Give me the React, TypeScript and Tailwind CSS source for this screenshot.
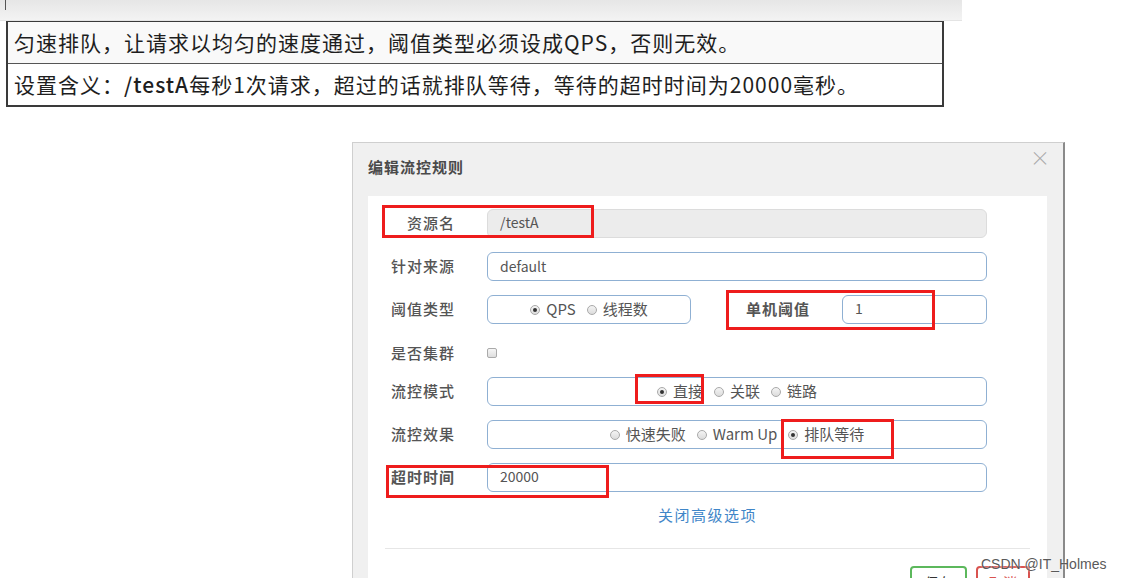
const cjk = { fontFamily: '"Noto Sans CJK SC", "Noto Sans", sans-serif' };

function Radio({ checked, label }: { checked?: boolean; label: string }) {
  return (
    <span className="flex items-center gap-[6px]">
      <span className="flex h-[10px] w-[10px] items-center justify-center rounded-full border border-[#a9a9a9] bg-gradient-to-b from-[#f4f4f4] to-[#dcdcdc]">
        {checked && <span className="h-[4px] w-[4px] rounded-full bg-[#333]" />}
      </span>
      <span>{label}</span>
    </span>
  );
}

function Label({ children, className = "" }: { children: React.ReactNode; className?: string }) {
  return (
    <div className={`w-[87px] shrink-0 text-right text-[15px] font-medium tracking-[1px] text-[#555] ${className}`}>
      {children}
    </div>
  );
}

const box = "h-[29px] rounded-[6px] border border-[#8fb0d3] bg-white";

export default function App() {
  const reds = [
    "left-[382px] top-[205px] w-[212px] h-[33px]",
    "left-[726px] top-[290px] w-[209px] h-[40px]",
    "left-[635px] top-[374px] w-[69px] h-[30px]",
    "left-[781px] top-[419px] w-[113px] h-[40px]",
    "left-[386px] top-[465px] w-[223px] h-[33px]",
  ];

  return (
    <div className="relative flex h-[578px] w-[1121px] flex-col overflow-hidden bg-white" style={cjk}>
      <div className="relative h-[21px] w-[962px] shrink-0 border-b border-[#e4e4e4] bg-gradient-to-b from-[#e6e6e6] to-[#f3f3f3]">
        <div className="absolute left-[5px] top-0 h-[10px] w-[1px] bg-[#555]" />
      </div>

      <div className="ml-[6px] w-[938px] shrink-0 border-2 border-t-[1.5px] border-[#3a3a3a] text-[21px] tracking-[1px] text-[#1e1e1e]">
        <div className="flex h-[42px] items-center border-b border-[#555] bg-[#f9f9f9] pl-[6px]">
          匀速排队，让请求以均匀的速度通过，阈值类型必须设成QPS，否则无效。
        </div>
        <div className="flex h-[41px] items-center bg-white pl-[6px]">
          设置含义：<span className="font-medium">/testA</span>每秒1次请求，超过的话就排队等待，等待的超时时间为20000毫秒。
        </div>
      </div>

      <div className="ml-[352px] mt-[35px] flex w-[713px] flex-1 flex-col border-l border-t border-r-2 border-[#cfcfcf] border-r-[#8a8a8a] bg-[#f0f0f0]">
        <div className="relative flex h-[53px] shrink-0 items-center pb-[4px] pl-[15px] text-[15px] font-semibold tracking-[1px] text-[#4a4a4a]">
          编辑流控规则
          <span className="absolute right-[12px] top-[0px] text-[20px] font-light text-[#a8a8a8]">×</span>
        </div>

        <div className="ml-[15px] mr-[16px] flex flex-1 flex-col bg-white pt-[13px]">
          <div className="mb-[14px] flex items-center">
            <Label>资源名</Label>
            <div className="ml-[32px] flex h-[29px] w-[500px] items-start rounded-[6px] border border-[#dcdcdc] bg-[#ececec] pl-[12px] pt-[2px] text-[14px] text-[#555]">
              /testA
            </div>
          </div>

          <div className="mb-[14px] flex items-center">
            <Label>针对来源</Label>
            <div className={`ml-[32px] flex w-[500px] items-center pl-[12px] text-[14px] text-[#555] ${box}`}>
              default
            </div>
          </div>

          <div className="mb-[14px] flex items-center">
            <Label>阈值类型</Label>
            <div className={`ml-[32px] flex w-[204px] items-center justify-center gap-[11px] text-[15px] text-[#555] ${box}`}>
              <Radio checked label="QPS" />
              <Radio label="线程数" />
            </div>
            <div className="w-[119px] text-right text-[15px] font-semibold tracking-[1px] text-[#555]">单机阈值</div>
            <div className={`ml-[32px] flex w-[145px] items-start pl-[12px] pt-[2px] text-[14px] text-[#555] ${box}`}>
              1
            </div>
          </div>

          <div className="mb-[9px] flex h-[30px] items-center">
            <Label>是否集群</Label>
            <span className="ml-[32px] h-[10px] w-[10px] rounded-[2px] border border-[#aaa] bg-gradient-to-b from-[#f6f6f6] to-[#dedede]" />
          </div>

          <div className="mb-[14px] flex items-center">
            <Label>流控模式</Label>
            <div className={`ml-[32px] flex w-[500px] items-center justify-center gap-[11px] text-[15px] text-[#555] ${box}`}>
              <Radio checked label="直接" />
              <Radio label="关联" />
              <Radio label="链路" />
            </div>
          </div>

          <div className="mb-[14px] flex items-center">
            <Label>流控效果</Label>
            <div className={`ml-[32px] flex w-[500px] items-center justify-center gap-[11px] text-[15px] text-[#555] ${box}`}>
              <Radio label="快速失败" />
              <Radio label="Warm Up" />
              <Radio checked label="排队等待" />
            </div>
          </div>

          <div className="flex items-center">
            <Label className="font-semibold text-[#333]">超时时间</Label>
            <div className={`ml-[32px] flex w-[500px] items-start pl-[12px] pt-[2px] text-[14px] text-[#555] ${box}`}>
              20000
            </div>
          </div>

          <div className="mt-[12px] flex h-[22px] items-center justify-center text-[15px] tracking-[1.5px] text-[#3f86c8]">
            关闭高级选项
          </div>

          <div className="mx-[17px] mt-[22px] border-t border-[#e6e6e6]" />

          <div className="mr-[17px] mt-[17px] flex justify-end gap-[9px]">
            <div className="flex h-[32px] w-[57px] items-center justify-center rounded-[4px] border-2 border-[#5cb85c] text-[14px] text-[#333]">
              保存
            </div>
            <div className="flex h-[32px] w-[54px] items-center justify-center rounded-[4px] border-2 border-[#d9534f] text-[14px] text-[#d9534f]">
              取消
            </div>
          </div>
        </div>
      </div>

      {reds.map((r) => (
        <div key={r} className={`pointer-events-none absolute border-[3px] border-[#ee1c1c] ${r}`} />
      ))}

      <div
        className="absolute left-[981px] top-[554px] text-[14px] text-[#5a5a5a] [text-shadow:0_0_2px_#fff]"
        style={{ fontFamily: '"Liberation Sans", Arial, sans-serif' }}
      >
        CSDN @IT_Holmes
      </div>
    </div>
  );
}
